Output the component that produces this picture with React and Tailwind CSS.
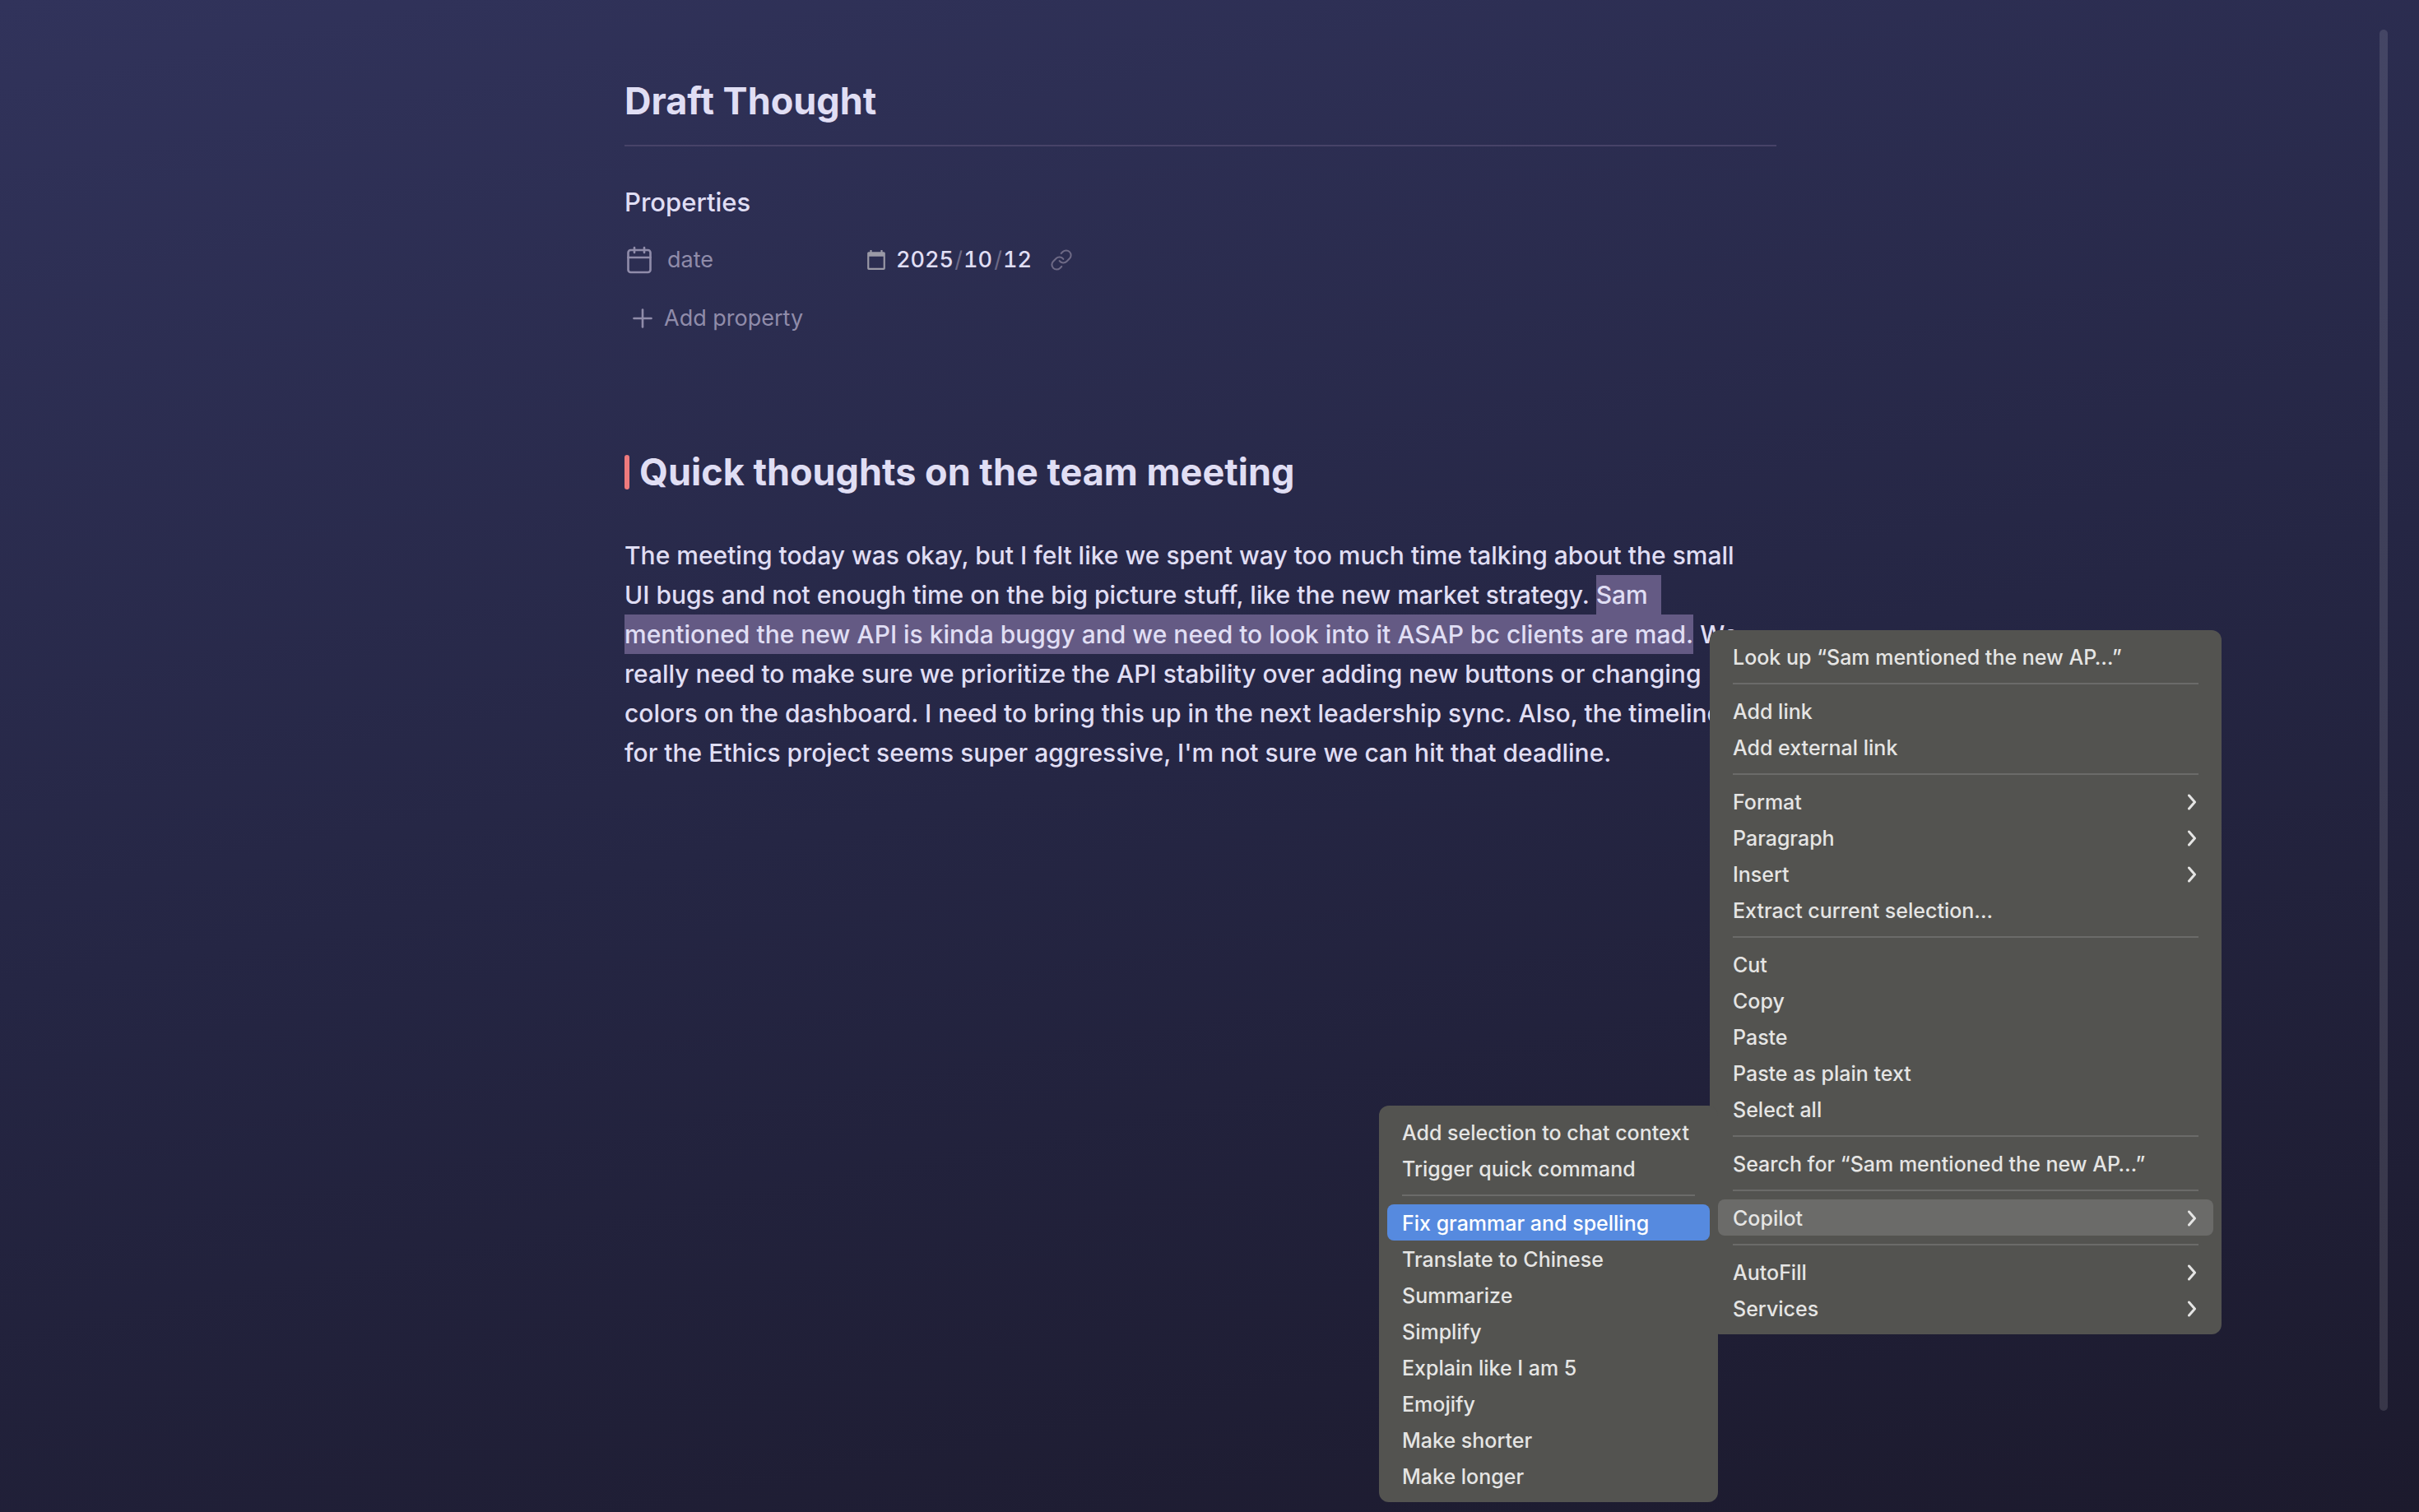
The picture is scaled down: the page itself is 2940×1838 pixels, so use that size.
import { Calendar, Link, Plus } from "lucide-react";

const MAIN_MENU = [
  [{ label: "Look up “Sam mentioned the new AP…”" }],
  [{ label: "Add link" }, { label: "Add external link" }],
  [
    { label: "Format", submenu: true },
    { label: "Paragraph", submenu: true },
    { label: "Insert", submenu: true },
    { label: "Extract current selection..." },
  ],
  [
    { label: "Cut" },
    { label: "Copy" },
    { label: "Paste" },
    { label: "Paste as plain text" },
    { label: "Select all" },
  ],
  [{ label: "Search for “Sam mentioned the new AP…”" }],
  [{ label: "Copilot", submenu: true, state: "open" }],
  [
    { label: "AutoFill", submenu: true },
    { label: "Services", submenu: true },
  ],
];

const COPILOT_MENU = [
  [{ label: "Add selection to chat context" }, { label: "Trigger quick command" }],
  [
    { label: "Fix grammar and spelling", state: "active" },
    { label: "Translate to Chinese" },
    { label: "Summarize" },
    { label: "Simplify" },
    { label: "Explain like I am 5" },
    { label: "Emojify" },
    { label: "Make shorter" },
    { label: "Make longer" },
  ],
];

const ITEM_STATES = {
  open: "bg-[#6b6b69] text-[#e5e5e4]",
  active: "bg-[#568adf] text-white",
  idle: "text-[#e5e5e4]",
};

function MenuItem({ label, submenu, state = "idle" }) {
  return (
    <button
      type="button"
      role="menuitem"
      aria-haspopup={submenu ? "menu" : undefined}
      className={`flex h-11 w-full items-center justify-between rounded-lg px-[18px] pt-[2px] text-left whitespace-nowrap ${ITEM_STATES[state]}`}
    >
      <span>{label}</span>
      {submenu && (
        <svg viewBox="0 0 12 20" className="mr-[2px] h-5 w-3" fill="none" stroke="currentColor" strokeWidth="3" strokeLinecap="round" strokeLinejoin="round" aria-hidden="true">
          <path d="M2.500 2 9.500 10 2.500 18" />
        </svg>
      )}
    </button>
  );
}

function Menu({ name, groups, className }) {
  return (
    <div
      role="menu"
      aria-label={name}
      className={`absolute rounded-xl bg-[#535350] p-[10px] text-[25px] leading-8 font-medium ${className}`}
    >
      {groups.map((items, i) => (
        <div key={i} role="group">
          {i > 0 && <hr className="mx-[18px] my-[10px] border-t-2 border-[#6b6b69]" />}
          {items.map((item) => (
            <MenuItem key={item.label} {...item} />
          ))}
        </div>
      ))}
    </div>
  );
}

function DateIcon() {
  return (
    <svg viewBox="0 0 24 24" className="size-[26px]" fill="currentColor" aria-hidden="true">
      <path d="M20.5 3H19V1h-2v2H7V1H5v2H3.500C2.700 3 2 3.700 2 4.500v17c0 .8.7 1.500 1.500 1.500h17c.8 0 1.500-.7 1.500-1.500v-17c0-.8-.7-1.500-1.500-1.500zM20 21H4V8h16v13z" />
    </svg>
  );
}

function DateField() {
  const part = "bg-transparent p-0 text-[#e0def4] font-medium tabular-nums outline-none";
  return (
    <div className="flex items-center">
      <button type="button" aria-label="Open date picker" className="mr-[11px] text-[#9a99a6]">
        <DateIcon />
      </button>
      <input id="date" aria-label="Year" defaultValue="2025" className={`w-[70px] ${part}`} />
      <span className="w-3 text-center text-[#6e6a86]">/</span>
      <input aria-label="Month" defaultValue="10" className={`w-9 ${part}`} />
      <span className="w-3 text-center text-[#6e6a86]">/</span>
      <input aria-label="Day" defaultValue="12" className={`w-9 ${part}`} />
      <button type="button" aria-label="Open daily note" className="ml-[21px] text-[#6e6a86]">
        <Link className="size-7" strokeWidth={1.75} />
      </button>
    </div>
  );
}

function Selected({ children, className = "" }) {
  return <mark className={`inline-block h-12 bg-[#645a84] align-top text-inherit ${className}`}>{children}</mark>;
}

export default function App() {
  return (
    <div className="flex min-h-screen overflow-hidden bg-linear-[169deg] from-[#31335b] via-[#252644] to-[#1c1a2d] font-[Inter,'Liberation_Sans',sans-serif] text-[#e0def4]">
      <main className="min-w-0 flex-1 pl-[26px]">
        <article className="relative mx-auto max-w-[1400px] pt-[93px]">
          <h1 className="border-b-2 border-[#474368] pb-[23px] text-[45px] leading-[60px] font-bold">
            Draft Thought
          </h1>

          <section aria-labelledby="properties" className="text-[27px]">
            <h2 id="properties" className="mt-12 text-[31px] leading-10 font-medium">
              Properties
            </h2>
            <div className="mt-[22px] flex h-14 items-center">
              <label htmlFor="date" className="flex w-[293px] items-center gap-4 text-[#908caa]">
                <Calendar className="size-9" strokeWidth={1.75} />
                date
              </label>
              <DateField />
            </div>
            <button type="button" className="mt-[15px] flex h-14 items-center gap-2 pl-1 text-[#908caa]">
              <Plus className="size-9" strokeWidth={1.75} />
              Add property
            </button>
          </section>

          <section className="mt-[129px]">
            <h2 className="flex items-center gap-3 text-[45px] leading-[60px] font-bold whitespace-nowrap">
              <span className="h-[42px] w-[6px] rounded-sm bg-[#ee7a7d]" />
              Quick thoughts on the team meeting
            </h2>
            <p className="mt-[47px] text-[30px] leading-[48px] font-medium whitespace-nowrap">
              The meeting today was okay, but I felt like we spent way too much time talking about the small
              <br />
              UI bugs and not enough time on the big picture stuff, like the new market strategy.{" "}
              <Selected className="pr-4">Sam</Selected>
              <br />
              <Selected>
                mentioned the new API is kinda buggy and we need to look into it ASAP bc clients are mad.
              </Selected>{" "}
              We
              <br />
              really need to make sure we prioritize the API stability over adding new buttons or changing
              <br />
              colors on the dashboard. I need to bring this up in the next leadership sync. Also, the timeline
              <br />
              for the Ethics project seems super aggressive, I'm not sure we can hit that deadline.
            </p>
          </section>

          <Menu name="Selection" groups={MAIN_MENU} className="top-[766px] left-[1319px] w-[622px]" />
          <Menu name="Copilot" groups={COPILOT_MENU} className="top-[1344px] left-[917px] w-[412px]" />
        </article>
      </main>
      <div className="flex w-12 shrink-0 pt-9 pb-[123px]" aria-hidden="true">
        <div className="w-[10px] rounded-full bg-white/12" />
      </div>
    </div>
  );
}
